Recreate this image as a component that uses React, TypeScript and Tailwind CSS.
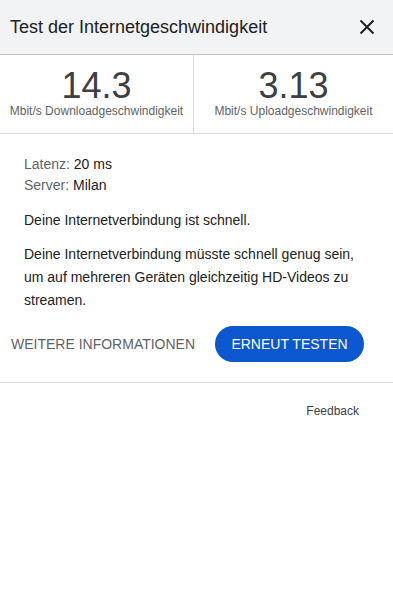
import React from 'react';

const stats = [
  { value: '14.3', label: 'Mbit/s Downloadgeschwindigkeit' },
  { value: '3.13', label: 'Mbit/s Uploadgeschwindigkeit' }
];

const App = () => {
  return (
    <div className="w-[393px] h-[597px] bg-white text-[#202124] font-['Liberation_Sans',Arial,sans-serif]">
      <header className="flex items-center justify-between h-[55px] pl-[10px] pr-[18px] bg-[#f1f3f4] border-b border-[#c4c4c4]">
        <h1 className="text-[18px] text-[#202124]">Test der Internetgeschwindigkeit</h1>
        <svg width="16" height="16" viewBox="0 0 16 16" className="text-[#202124]">
          <path d="M1.5 1.5L14.5 14.5M14.5 1.5L1.5 14.5" stroke="currentColor" strokeWidth="2" />
        </svg>
      </header>

      <section className="flex h-[79px] border-b border-[#dadce0]">
        {stats.map((s, i) => (
          <div
            key={s.label}
            className={`flex flex-col items-center pt-[13px] ${i === 0 ? 'w-[194px] border-r border-[#dadce0]' : 'flex-1'}`}
          >
            <p className="text-[36px] leading-[36px] text-[#3c4043]">{s.value}</p>
            <p className="text-[12px] leading-[14px] text-[#5f6368]">{s.label}</p>
          </div>
        ))}
      </section>

      <section className="px-[24px] pt-[20px] text-[14px]">
        <p className="leading-[21px]">
          <span className="text-[#5f6368]">Latenz: </span>20 ms
        </p>
        <p className="leading-[21px]">
          <span className="text-[#5f6368]">Server: </span>Milan
        </p>
        <p className="mt-[13px] leading-[22px]">Deine Internetverbindung ist schnell.</p>
        <p className="mt-[12px] leading-[23px]">
          Deine Internetverbindung müsste schnell genug sein, um auf mehreren Geräten gleichzeitig HD-Videos zu
          streamen.
        </p>
      </section>

      <div className="flex items-center justify-between pl-[11px] pr-[29px] mt-[14px] pb-[20px] border-b border-[#dadce0]">
        <span className="text-[14px] text-[#5f6368]">WEITERE INFORMATIONEN</span>
        <button className="h-[36px] w-[149px] rounded-full bg-[#0b57d0] text-white text-[14px]">ERNEUT TESTEN</button>
      </div>

      <div className="flex justify-end pr-[34px] pt-[19px]">
        <span className="text-[12px] text-[#3c4043]">Feedback</span>
      </div>
    </div>
  );
};

export default App;
